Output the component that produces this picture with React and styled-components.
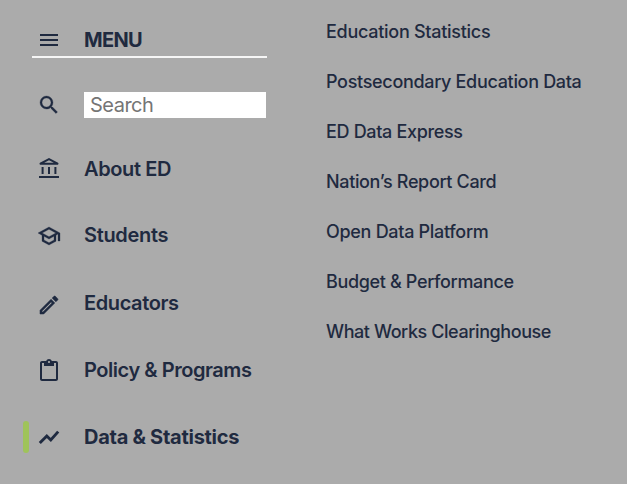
import React from 'react';
import styled, { createGlobalStyle } from 'styled-components';
import { MdMenu, MdSearch, MdOutlineSchool, MdOutlineEdit } from 'react-icons/md';

const GlobalStyle = createGlobalStyle`
  * { box-sizing: border-box; }
  body { margin: 0; background: #ababab; color: #1f2a40; font-family: Inter, "Liberation Sans", sans-serif; }
`;

const Page = styled.div`
  display: flex;
  height: 484px;
  background: #ababab;
`;

const Sidebar = styled.nav`
  width: 326px;
  padding: 24px 0 0 23px;
`;

const MenuHeader = styled.div`
  display: flex;
  align-items: center;
  width: 235px;
  height: 34px;
  margin-left: 9px;
  padding-left: 5px;
  border-bottom: 2px solid #f6f6f6;
`;

const IconBox = styled.span`
  display: flex;
  width: 24px;
  height: 24px;
  margin-right: 23px;
  padding-top: ${(p) => p.$drop || 0}px;
  svg { width: 24px; height: 24px; flex: none; stroke-width: ${(p) => p.$weight || 0}; }
  path[fill="none"] { stroke: none; }
`;

const Label = styled.span`
  font-size: 20px;
  line-height: 24px;
  font-weight: ${(p) => (p.$strong ? 700 : 600)};
  letter-spacing: ${(p) => p.$spacing || '-0.4px'};
  padding-bottom: ${(p) => p.$lift || 0}px;
  white-space: nowrap;
`;

const SearchRow = styled.div`
  display: flex;
  align-items: center;
  height: 26px;
  margin-top: 34px;
  padding-left: 14px;
`;

const SearchInput = styled.input`
  width: 182px;
  height: 26px;
  padding: 0 6px;
  border: 0;
  border-radius: 0;
  background: #fff;
  font: 400 20px/24px Inter, sans-serif;
  letter-spacing: -0.5px;
  outline: none;
  &::placeholder { color: #757575; opacity: 1; }
`;

const Items = styled.div`
  display: flex;
  flex-direction: column;
  gap: 34px;
  padding-top: 34px;
`;

const Item = styled.div`
  display: flex;
  align-items: center;
  height: 33px;
`;

const Marker = styled.span`
  width: 6px;
  height: 32px;
  margin-right: 8px;
  border-radius: 3px;
  background: ${(p) => (p.$active ? '#9fc35a' : 'transparent')};
`;

const SubMenu = styled.div`
  padding-top: 20px;
  display: flex;
  flex-direction: column;
  gap: 26px;
`;

const SubLink = styled.span`
  font-size: 18px;
  line-height: 24px;
  font-weight: 500;
  letter-spacing: ${(p) => p.$spacing};
  white-space: nowrap;
`;

const Bank = () => (
  <svg viewBox="0 0 24 24" fill="none" stroke="currentColor">
    <path stroke="currentColor" d="M2 20h20M5.6 10v7M12 10v7M18.4 10v7" />
    <path stroke="currentColor" d="M2.9 6.8L12 2.1l9.1 4.7z" />
  </svg>
);

const Clipboard = () => (
  <svg viewBox="0 0 24 24" fill="currentColor">
    <path d="M19 2h-4.18C14.4.84 13.3 0 12 0S9.6.84 9.18 2H5c-1.1 0-2 .9-2 2v16c0 1.1.9 2 2 2h14c1.1 0 2-.9 2-2V4c0-1.1-.9-2-2-2zm-7 0c.55 0 1 .45 1 1s-.45 1-1 1-1-.45-1-1 .45-1 1-1zm7 18H5V4h2v3h10V4h2v16z" />
  </svg>
);

const Trend = () => (
  <svg viewBox="0 0 24 24" fill="none" stroke="currentColor">
    <path d="M2.8 18l7-7 4 4 7.4-8.4" />
  </svg>
);

const sections = [
  { name: 'About ED', Icon: Bank, spacing: '-0.37px', weight: 2 },
  { name: 'Students', Icon: MdOutlineSchool, spacing: '-0.33px', lift: 2, weight: 0.3 },
  { name: 'Educators', Icon: MdOutlineEdit, drop: 2, weight: 0.5 },
  { name: 'Policy & Programs', Icon: Clipboard, drop: 1, spacing: '-0.45px' },
  { name: 'Data & Statistics', Icon: Trend, active: true, spacing: '-0.27px', weight: 2.9 },
];
const links = [
  ['Education Statistics', '-0.28px'], ['Postsecondary Education Data', '-0.32px'],
  ['ED Data Express', '-0.33px'], ['Nation’s Report Card', '-0.35px'],
  ['Open Data Platform', '-0.3px'], ['Budget & Performance', '-0.35px'],
  ['What Works Clearinghouse', '-0.42px'],
];

export default function App() {
  return (
    <Page>
      <GlobalStyle />
      <Sidebar>
        <MenuHeader><IconBox><MdMenu /></IconBox><Label $strong $spacing="-0.65px">MENU</Label></MenuHeader>
        <SearchRow><IconBox $weight={0.3}><MdSearch /></IconBox><SearchInput placeholder="Search" /></SearchRow>
        <Items>
          {sections.map(({ name, Icon, active, drop, lift, spacing, weight }) => (
            <Item key={name}>
              <Marker $active={active} />
              <IconBox $drop={drop} $weight={weight}><Icon /></IconBox>
              <Label $strong={active} $spacing={spacing} $lift={lift}>{name}</Label>
            </Item>
          ))}
        </Items>
      </Sidebar>
      <SubMenu>{links.map(([name, spacing]) => <SubLink key={name} $spacing={spacing}>{name}</SubLink>)}</SubMenu>
    </Page>
  );
}
